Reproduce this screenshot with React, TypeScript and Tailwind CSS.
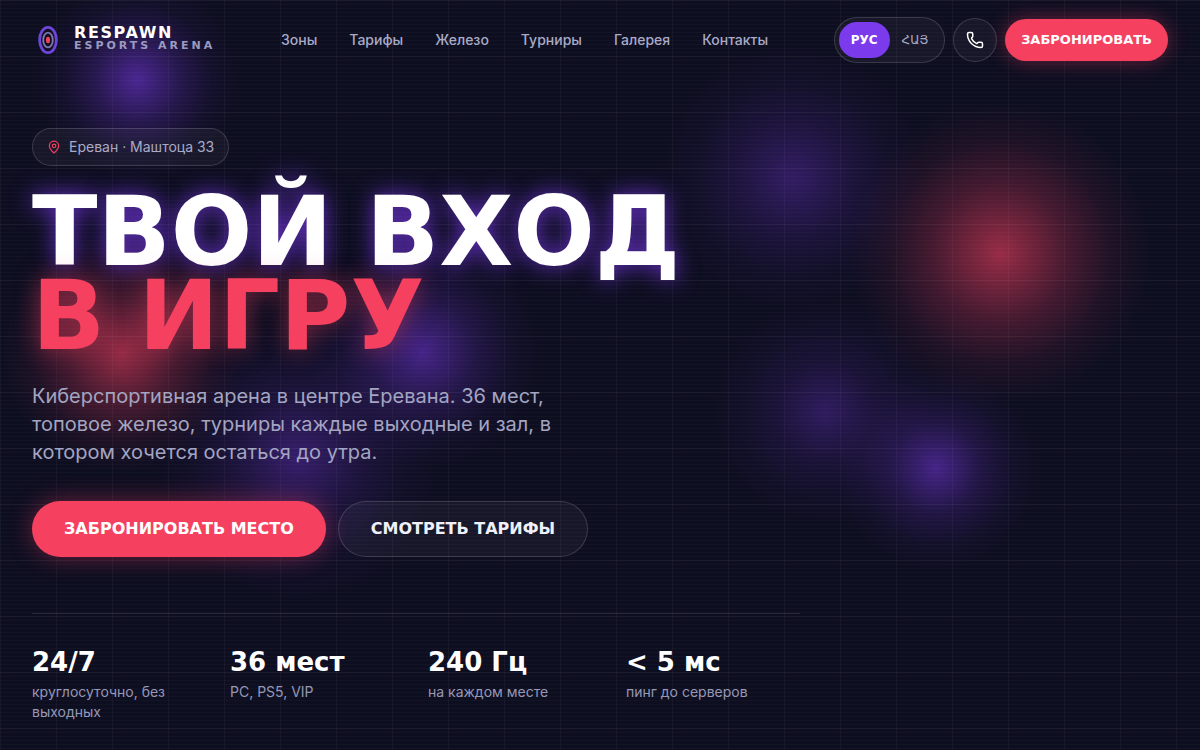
import { useState } from 'react';
import { MapPin, Phone } from 'lucide-react';

const navLinks = [
  { href: '#zones', label: 'Зоны' },
  { href: '#prices', label: 'Тарифы' },
  { href: '#hardware', label: 'Железо' },
  { href: '#tournaments', label: 'Турниры' },
  { href: '#gallery', label: 'Галерея' },
  { href: '#contacts', label: 'Контакты' },
];

const stats = [
  { value: '24/7', label: 'круглосуточно, без выходных' },
  { value: '36 мест', label: 'PC, PS5, VIP' },
  { value: '240 Гц', label: 'на каждом месте' },
  { value: '< 5 мс', label: 'пинг до серверов' },
];

const Background = () => (
  <div className="pointer-events-none absolute inset-0" aria-hidden="true">
    {/* glow spots */}
    <div className="absolute inset-0 bg-[radial-gradient(circle_100px_at_137px_80px,#7c3aed8c,#7c3aed33_45%,#7c3aed0d_75%,transparent),radial-gradient(circle_130px_at_793px_178px,#7c3aed52,#7c3aed21_45%,#7c3aed0a_75%,transparent),radial-gradient(circle_150px_at_1000px_253px,#f43f5e99,#f43f5e3d_45%,#f43f5e12_75%,transparent),radial-gradient(circle_110px_at_825px_412px,#7c3aed4d,#7c3aed1c_45%,#7c3aed0a_75%,transparent),radial-gradient(circle_100px_at_936px_468px,#7c3aed80,#7c3aed2b_45%,#7c3aed0d_75%,transparent),radial-gradient(circle_115px_at_422px_352px,#7c3aed80,#7c3aed30_45%,#7c3aed0d_75%,transparent),radial-gradient(circle_120px_at_122px_352px,#f43f5e99,#f43f5e3d_45%,#f43f5e12_75%,transparent),radial-gradient(circle_140px_at_298px_458px,#7c3aed5c,#7c3aed21_45%,#7c3aed0a_75%,transparent)]" />
    {/* 56px grid */}
    <div className="absolute inset-0 bg-[linear-gradient(#ffffff09_1px,transparent_1px),linear-gradient(90deg,#ffffff09_1px,transparent_1px)] bg-[size:56px_56px]" />
    {/* scanlines */}
    <div className="absolute inset-0 bg-[repeating-linear-gradient(180deg,#ffffff06_0px,#ffffff06_1px,transparent_1px,transparent_4px)]" />
  </div>
);

const Logo = () => (
  <a href="#top" className="flex items-center gap-2.5">
    <svg viewBox="0 0 32 32" className="size-8" fill="none" aria-hidden="true">
      <ellipse cx="16" cy="16" rx="8.4" ry="12.6" stroke="#6d45d8" strokeWidth="2.8" />
      <ellipse cx="16" cy="16" rx="4.8" ry="7.4" stroke="#7f78ad" strokeWidth="1.8" />
      <ellipse cx="16" cy="16" rx="2" ry="3.2" fill="#f43f5e" />
    </svg>
    <span className="flex flex-col font-['DejaVu_Sans',sans-serif] font-bold">
      <span className="text-base leading-3 tracking-widest text-white">RESPAWN</span>
      <span className="text-[11px] leading-[14px] tracking-[3px] text-[#9b9bc0]">ESPORTS ARENA</span>
    </span>
  </a>
);

const Header = () => {
  const [lang, setLang] = useState('ru');

  return (
    <header className="flex h-20 items-center justify-between px-8">
      <Logo />
      <nav className="flex gap-8 text-sm font-medium text-[#a9abc6]">
        {navLinks.map((link) => (
          <a key={link.href} href={link.href} className="hover:text-white">{link.label}</a>
        ))}
      </nav>
      <div className="flex items-center gap-2">
        <div className="flex items-center rounded-full border border-white/15 bg-white/4 p-1 font-['DejaVu_Sans',sans-serif] text-xs">
          <button
            type="button"
            onClick={() => setLang('ru')}
            className={lang === 'ru' ? 'h-9 rounded-full bg-[#7c3aed] px-3 font-bold text-white' : 'h-9 rounded-full px-3 text-[#a9abc6]'}
          >
            РУС
          </button>
          <button
            type="button"
            onClick={() => setLang('hy')}
            className={lang === 'hy' ? 'h-9 rounded-full bg-[#7c3aed] px-3 font-bold text-white' : 'h-9 rounded-full px-3 text-[#a9abc6]'}
          >
            ՀԱՅ
          </button>
        </div>
        <a href="tel:+37400000000" aria-label="Позвонить" className="flex size-11 items-center justify-center rounded-full border border-white/15 bg-white/4 text-white">
          <Phone className="size-[18px]" strokeWidth={2} />
        </a>
        <button type="button" className="h-[42px] rounded-full bg-[#f5415f] px-4 font-['DejaVu_Sans',sans-serif] text-[13px] font-bold text-white shadow-[0_0_20px_#f43f5e66]">
          ЗАБРОНИРОВАТЬ
        </button>
      </div>
    </header>
  );
};

const Hero = () => (
  <main className="flex flex-col items-start px-8 pt-12">
    <p className="flex h-[38px] items-center gap-2 rounded-full border border-white/15 bg-white/4 px-3.5 text-sm text-[#a9abc6]">
      <MapPin className="size-3.5 text-[#f43f5e]" />
      Ереван · Маштоца 33
    </p>
    <h1 className="mt-6 font-['DejaVu_Sans',sans-serif] text-[96px] leading-[84px] font-bold text-white [text-shadow:0_0_22px_#7c3aedcc]">
      ТВОЙ ВХОД
      <span className="block text-[#f5415f] [text-shadow:0_0_24px_#f43f5e80]">В ИГРУ</span>
    </h1>
    <p className="mt-6 max-w-xl text-xl leading-7 text-[#a3a5c2]">
      Киберспортивная арена в центре Еревана. 36 мест, топовое железо, турниры каждые выходные и зал, в котором хочется остаться до утра.
    </p>
    <div className="mt-[35px] flex gap-3 font-['DejaVu_Sans',sans-serif] text-base font-bold">
      <button type="button" className="h-14 rounded-full bg-[#f5415f] px-8 text-white shadow-[0_0_24px_#f43f5e66]">ЗАБРОНИРОВАТЬ МЕСТО</button>
      <button type="button" className="h-14 rounded-full border border-white/15 bg-white/4 px-8 text-[#f0f0fa]">СМОТРЕТЬ ТАРИФЫ</button>
    </div>
    <dl className="mt-14 grid w-full max-w-3xl grid-cols-4 gap-6 border-t border-white/10 pt-8">
      {stats.map((stat) => (
        <div key={stat.value} className="flex flex-col-reverse justify-end gap-1">
          <dt className="text-sm leading-5 text-[#9698b6]">{stat.label}</dt>
          <dd className="font-['DejaVu_Sans',sans-serif] text-[26px] leading-8 font-bold text-white">{stat.value}</dd>
        </div>
      ))}
    </dl>
  </main>
);

const App = () => (
  <div id="top" className="relative min-h-screen overflow-hidden bg-[#0e0e21] font-['Inter',sans-serif]">
    <Background />
    <div className="relative">
      <Header />
      <Hero />
    </div>
  </div>
);

export default App;
